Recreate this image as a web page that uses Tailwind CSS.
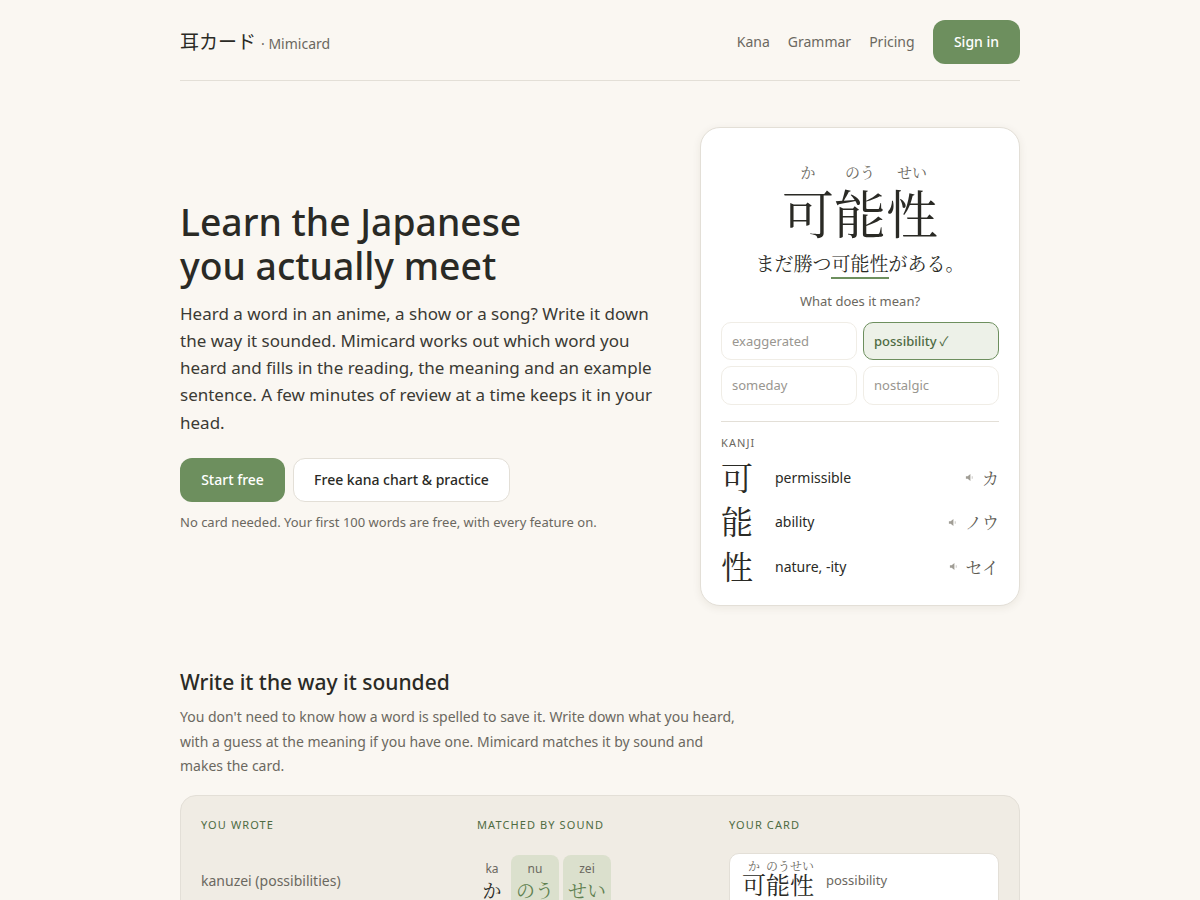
<!DOCTYPE html>
<html lang="ja">
<head>
  <meta charset="UTF-8">
  <meta name="viewport" content="width=device-width, initial-scale=1.0">
  <title>Mimicard</title>
  <script src="https://cdn.jsdelivr.net/npm/@tailwindcss/browser@4"></script>
</head>
<body class="bg-[#faf7f2] text-[#2a2a25] font-['Noto_Sans','Noto_Sans_CJK_JP',sans-serif]">
  <div class="h-[900px] overflow-hidden">
    <div class="w-[840px] mx-auto">

      <!-- header -->
      <header class="pt-5 pb-4 flex items-center justify-between border-b border-[#e3dfd7]">
        <div class="flex items-baseline">
          <span class="text-[19px]">耳カード</span>
          <span class="text-sm text-[#6b6860] ml-[5px]">· Mimicard</span>
        </div>
        <nav class="flex items-center text-sm text-[#6b6860]">
          <a class="mr-[18px]">Kana</a>
          <a class="mr-[18px]">Grammar</a>
          <a class="mr-[18.4px]">Pricing</a>
          <a class="h-[44px] w-[87px] flex items-center justify-center rounded-xl bg-[#6d8f5e] text-white font-medium">Sign in</a>
        </nav>
      </header>

      <!-- hero -->
      <section class="flex items-center justify-between pt-[46px]">
        <div class="w-[480px] pb-[1px]">
          <h1 class="text-[37.3px] leading-[44px] font-medium">Learn the Japanese<br>you actually meet</h1>
          <p class="mt-[12px] text-[17px] leading-[27.2px] text-[#3b3a34]">Heard a word in an anime, a show or a song? Write it down the way it sounded. Mimicard works out which word you heard and fills in the reading, the meaning and an example sentence. A few minutes of review at a time keeps it in your head.</p>
          <div class="flex gap-2 mt-[22px]">
            <a class="h-[44px] w-[105px] flex items-center justify-center rounded-xl bg-[#6d8f5e] text-white text-sm font-medium">Start free</a>
            <a class="h-[44px] w-[217px] flex items-center justify-center rounded-xl bg-white border border-[#e3dfd7] text-sm font-medium">Free kana chart &amp; practice</a>
          </div>
          <p class="mt-[11px] text-[13px] text-[#6b6860]">No card needed. Your first 100 words are free, with every feature on.</p>
        </div>

        <div class="w-[320px] h-[479px] bg-white rounded-[20px] border border-[#e3dfd7] shadow-[0_2px_8px_rgba(60,50,30,0.08)] px-5 pt-[34px]">
          <div class="flex justify-center text-[15px] text-[#6b6860] font-['Noto_Serif_CJK_JP','Noto_Sans_CJK_JP',serif] leading-[19px]">
            <span class="w-[52px] text-center">か</span>
            <span class="w-[52px] text-center">のう</span>
            <span class="w-[52px] text-center">せい</span>
          </div>
          <p class="text-center text-[52px] leading-[62px] font-['Noto_Serif_CJK_JP','Noto_Sans_CJK_JP',serif]">可能性</p>
          <p class="text-center text-[19px] leading-[31px] mt-[4px] font-['Noto_Serif_CJK_JP','Noto_Sans_CJK_JP',serif]">まだ勝つ<span class="border-b-2 border-[#6d8f5e] pb-[1px]">可能性</span>がある。</p>
          <p class="text-center text-[13px] text-[#6b6860] mt-[14px] leading-[18px]">What does it mean?</p>
          <div class="grid grid-cols-2 gap-[6px] mt-[12px] text-[13px] text-[#999690]">
            <div class="h-[38px] px-[10px] pt-[1px] flex items-center rounded-[10px] border border-[#f0ede6]">exaggerated</div>
            <div class="h-[38px] px-[10px] pt-[1px] flex items-center rounded-[10px] border border-[#6d8f5e] bg-[#edf1e8] text-[#4e6b42] font-medium">possibility<span class="ml-[3px] font-normal">✓</span></div>
            <div class="h-[39px] px-[10px] flex items-center rounded-[10px] border border-[#f0ede6]">someday</div>
            <div class="h-[39px] px-[10px] flex items-center rounded-[10px] border border-[#f0ede6]">nostalgic</div>
          </div>
          <div class="border-t border-[#e3dfd7] mt-4 pt-[13px]">
            <p class="text-[11px] leading-[15px] tracking-[0.1em] text-[#6b6860]">KANJI</p>
            <div class="mt-[5px] flex items-center h-[45px]">
              <span class="w-[54px] pb-[4px] text-[32px] font-['Noto_Serif_CJK_JP','Noto_Sans_CJK_JP',serif]">可</span>
              <span class="flex-1 text-sm">permissible</span>
              <svg class="w-[9px] h-[9px] mr-2 text-[#a09d95]" viewBox="0 0 10 10" fill="currentColor"><path d="M1 3.5h2L6 1v8L3 6.5H1z"/><path d="M7.5 3.5v3h1v-3z" opacity="0.6"/></svg>
              <span class="text-[17px] text-[#5c5a52] font-['Noto_Serif_CJK_JP','Noto_Sans_CJK_JP',serif]">カ</span>
            </div>
            <div class="flex items-center h-[44px]">
              <span class="w-[54px] pb-[4px] text-[32px] font-['Noto_Serif_CJK_JP','Noto_Sans_CJK_JP',serif]">能</span>
              <span class="flex-1 text-sm">ability</span>
              <svg class="w-[9px] h-[9px] mr-2 text-[#a09d95]" viewBox="0 0 10 10" fill="currentColor"><path d="M1 3.5h2L6 1v8L3 6.5H1z"/><path d="M7.5 3.5v3h1v-3z" opacity="0.6"/></svg>
              <span class="text-[17px] text-[#5c5a52] font-['Noto_Serif_CJK_JP','Noto_Sans_CJK_JP',serif]">ノウ</span>
            </div>
            <div class="flex items-center h-[45px]">
              <span class="w-[54px] pb-[4px] text-[32px] font-['Noto_Serif_CJK_JP','Noto_Sans_CJK_JP',serif]">性</span>
              <span class="flex-1 text-sm">nature, -ity</span>
              <svg class="w-[9px] h-[9px] mr-2 text-[#a09d95]" viewBox="0 0 10 10" fill="currentColor"><path d="M1 3.5h2L6 1v8L3 6.5H1z"/><path d="M7.5 3.5v3h1v-3z" opacity="0.6"/></svg>
              <span class="text-[17px] text-[#5c5a52] font-['Noto_Serif_CJK_JP','Noto_Sans_CJK_JP',serif]">セイ</span>
            </div>
          </div>
        </div>
      </section>

      <!-- how it works -->
      <section class="mt-[60px]">
        <h2 class="text-[21px] leading-[32px] font-medium">Write it the way it sounded</h2>
        <p class="mt-[7px] w-[560px] text-sm leading-[24.65px] text-[#6b6860]">You don't need to know how a word is spelled to save it. Write down what you heard, with a guess at the meaning if you have one. Mimicard matches it by sound and makes the card.</p>
        <div class="mt-4 h-[200px] rounded-[16px] bg-[#f0ece4] border border-[#e3dfd7] px-5 pt-[21px] grid grid-cols-[276px_252px_1fr]">
          <div>
            <p class="text-[11px] tracking-[0.1em] text-[#4e6b42]">YOU WROTE</p>
            <p class="mt-[38px] text-sm text-[#6b6860]">kanuzei (possibilities)</p>
          </div>
          <div>
            <p class="text-[11px] tracking-[0.1em] text-[#4e6b42]">MATCHED BY SOUND</p>
            <div class="flex gap-1 mt-[22px] text-center">
              <div class="w-[30px] pt-[6px]">
                <p class="text-xs text-[#6b6860]">ka</p>
                <p class="text-[19px] -mt-[1px] font-['Noto_Serif_CJK_JP','Noto_Sans_CJK_JP',serif]">か</p>
              </div>
              <div class="w-[48px] h-[80px] pt-[6px] rounded-lg bg-[#dbe0cd]">
                <p class="text-xs text-[#6b6860]">nu</p>
                <p class="text-[19px] -mt-[1px] text-[#5f8050] font-['Noto_Serif_CJK_JP','Noto_Sans_CJK_JP',serif]">のう</p>
              </div>
              <div class="w-[48px] h-[80px] pt-[6px] rounded-lg bg-[#dbe0cd]">
                <p class="text-xs text-[#6b6860]">zei</p>
                <p class="text-[19px] -mt-[1px] text-[#5f8050] font-['Noto_Serif_CJK_JP','Noto_Sans_CJK_JP',serif]">せい</p>
              </div>
            </div>
          </div>
          <div>
            <p class="text-[11px] tracking-[0.1em] text-[#4e6b42]">YOUR CARD</p>
            <div class="mt-[20px] h-[80px] rounded-[10px] bg-white border border-[#e3dfd7] px-[12px] flex">
              <div>
                <div class="flex justify-center text-[12px] leading-[14px] mt-[5px] text-[#6b6860] font-['Noto_Serif_CJK_JP','Noto_Sans_CJK_JP',serif]">
                  <span class="w-[24px] text-center">か</span>
                  <span class="w-[24px] text-center">のう</span>
                  <span class="w-[24px] text-center">せい</span>
                </div>
                <p class="text-[24px] leading-[28px] -mt-[3px] font-['Noto_Serif_CJK_JP','Noto_Sans_CJK_JP',serif]">可能性</p>
              </div>
              <p class="ml-3 mt-[17px] text-[13px] text-[#6b6860]">possibility</p>
            </div>
          </div>
        </div>
      </section>

    </div>
  </div>
</body>
</html>
